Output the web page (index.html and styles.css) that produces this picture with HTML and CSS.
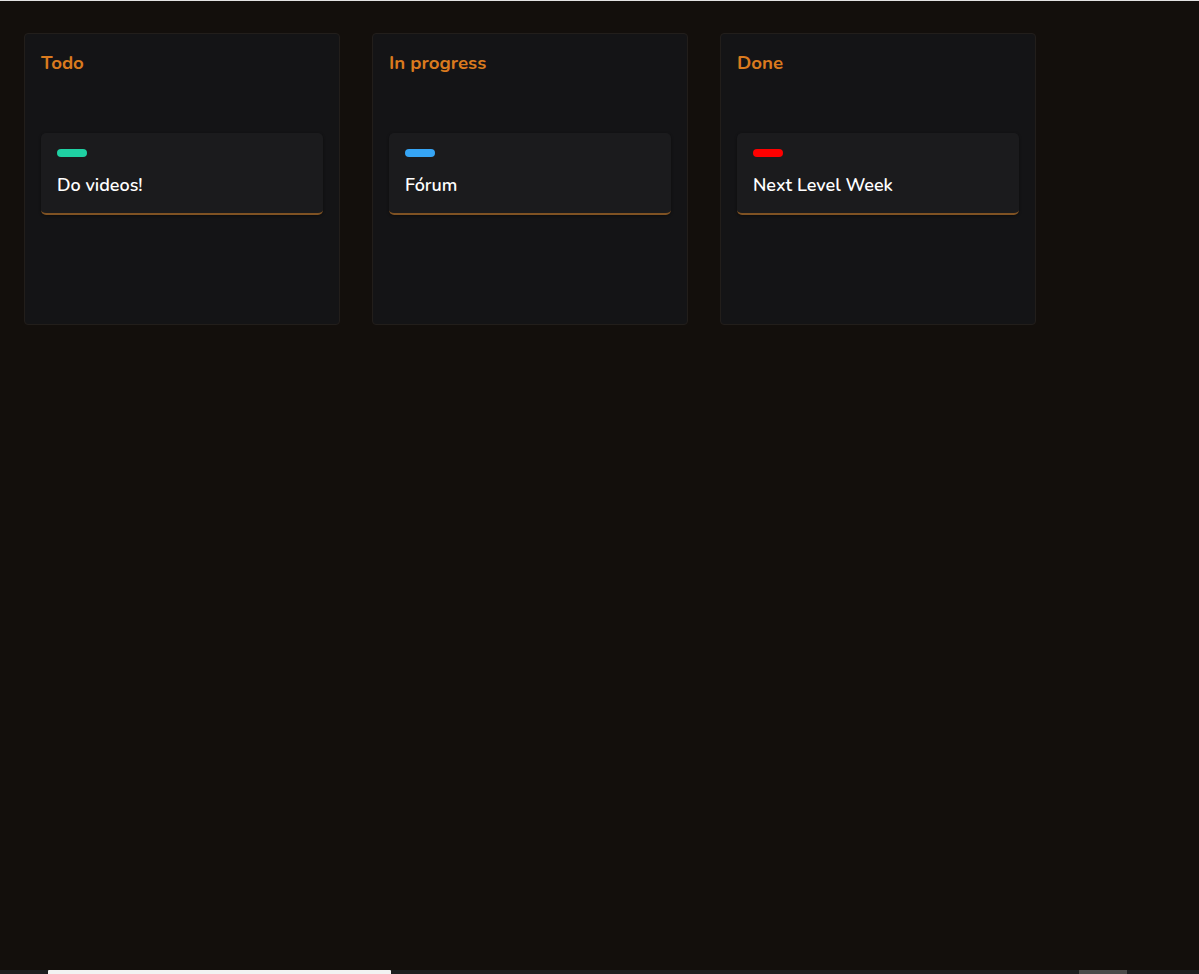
FILE: index.html
```html
<!DOCTYPE html>
<html lang="en">
<head>
<meta charset="utf-8">
<title>Board</title>
<link rel="stylesheet" href="styles.css">
</head>
<body>
<div class="topline"></div>
<main class="board">
  <section class="column">
    <h2 class="column-title">Todo</h2>
    <div class="card">
      <span class="label label-green"></span>
      <p class="card-text">Do videos!</p>
    </div>
  </section>
  <section class="column">
    <h2 class="column-title">In progress</h2>
    <div class="card">
      <span class="label label-blue"></span>
      <p class="card-text">Fórum</p>
    </div>
  </section>
  <section class="column">
    <h2 class="column-title">Done</h2>
    <div class="card">
      <span class="label label-red"></span>
      <p class="card-text">Next Level Week</p>
    </div>
  </section>
</main>
<div class="hscroll">
  <div class="thumb thumb-light"></div>
  <div class="spacer"></div>
  <div class="thumb thumb-dark"></div>
</div>
</body>
</html>
```
FILE: styles.css
```css
* { box-sizing: border-box; }
html, body { margin: 0; padding: 0; }
body {
  background: #130f0c;
  font-family: "Nunito", "Lato", "Noto Sans", sans-serif;
  color: #fff;
  min-height: 974px;
}
.topline { height: 1px; background: #e2e2e2; }
.board {
  display: flex;
  gap: 32px;
  padding: 32px 24px;
  align-items: flex-start;
}
.column {
  width: 316px;
  height: 292px;
  background: #141416;
  border: 1px solid #221e1b;
  border-radius: 4px;
  padding: 16px;
}
.column-title {
  margin: 0 0 56px;
  font-size: 18.7px;
  line-height: 27px;
  font-weight: 700;
  color: #da7a1e;
}
.card {
  background: #1b1b1d;
  border-radius: 5px;
  border-bottom: 2px solid #7f5223;
  box-shadow: 0 1px 3px rgba(0,0,0,0.4);
  padding: 16px;
}
.label {
  display: block;
  width: 30px;
  height: 8px;
  border-radius: 4px;
}
.label-green { background: #1fd1a3; }
.label-blue { background: #36a5f5; }
.label-red { background: #ff0000; }
.card-text {
  margin: 16px 0 0;
  font-size: 18px;
  line-height: 24px;
  font-weight: 600;
  color: #fff;
}
.hscroll {
  position: fixed;
  left: 0;
  right: 0;
  bottom: 0;
  height: 4px;
  background: #1c1e20;
  display: flex;
  padding-left: 48px;
  padding-right: 72px;
}
.thumb { height: 4px; }
.thumb-light { width: 343px; background: #f2f2f2; border-radius: 1px 1px 0 0; }
.spacer { flex: 1; }
.thumb-dark { width: 48px; background: #4a4a4a; }
```
